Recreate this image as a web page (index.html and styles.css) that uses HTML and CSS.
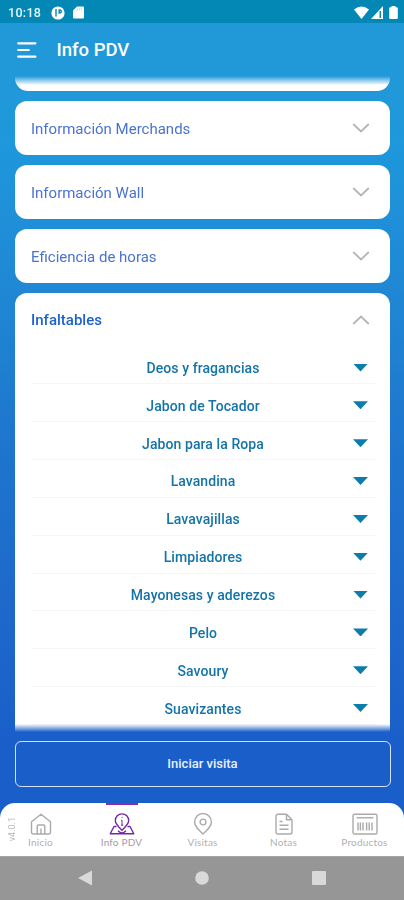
FILE: index.html
```html
<!DOCTYPE html>
<html lang="es">
<head>
<meta charset="utf-8">
<title>Info PDV</title>
<link rel="stylesheet" href="styles.css">
</head>
<body>
<div class="app">
  <div class="status">
    <span class="clock">10:18</span>
    <svg class="st-p" width="14" height="14" viewBox="0 0 14 14"><circle cx="7" cy="7" r="6.600" fill="#fff"/><path d="M5 3v7.500M8.200 4h.6a1.500 1.500 0 0 1 0 3H8.200z" fill="none" stroke="#0387b4" stroke-width="1.400"/></svg>
    <svg class="st-sd" width="11" height="13" viewBox="0 0 11 13"><path d="M4 .5h6a1 1 0 0 1 1 1v10a1 1 0 0 1-1 1H1a1 1 0 0 1-1-1v-7z" fill="#fff"/><path d="M4.500 2.200v2M6.500 2.200v2M8.500 2.200v2" stroke="#9fd0e2" stroke-width=".7"/></svg>
    <div class="st-right">
      <svg width="15" height="13" viewBox="0 0 15 13"><path d="M0 3.600Q7.500-2.600 15 3.600L7.500 13z" fill="#fff"/></svg>
      <svg width="12" height="13" viewBox="0 0 12 13"><path d="M0 13L12 0V13z" fill="#fff"/><path d="M9.300 5v7" stroke="#0387b4" stroke-width="1.600"/></svg>
      <svg class="st-bat" width="9" height="13" viewBox="0 0 9 13"><path d="M2.500 1.300V0h4v1.300h1.300q1 0 1 1V12q0 1-1 1H1.200q-1 0-1-1V2.300q0-1 1-1z" fill="#fff"/></svg>
    </div>
  </div>
  <header class="header">
    <svg width="20" height="18" viewBox="0 0 20 18"><path d="M1.200 2.300h17.200M1.200 9h10.600M1.200 15.700h17.200" stroke="#fff" stroke-width="2.200" stroke-linecap="round"/></svg>
    <h1>Info PDV</h1>
  </header>
  <main class="list">
    <section class="card stub"></section>
    <section class="card"><div class="head"><span class="t1">Información Merchands</span><svg width="18" height="10" viewBox="0 0 18 10"><path d="M1.200 1L9 8.500 16.800 1"/></svg></div></section>
    <section class="card"><div class="head"><span class="t1">Información Wall</span><svg width="18" height="10" viewBox="0 0 18 10"><path d="M1.200 1L9 8.500 16.800 1"/></svg></div></section>
    <section class="card"><div class="head"><span class="t1">Eficiencia de horas</span><svg width="18" height="10" viewBox="0 0 18 10"><path d="M1.200 1L9 8.500 16.800 1"/></svg></div></section>
    <section class="card open">
      <div class="head"><span class="t2">Infaltables</span><svg width="18" height="10" viewBox="0 0 18 10"><path d="M1.200 9L9 1.500 16.800 9"/></svg></div>
      <ul class="rows">
        <li><span>Deos y fragancias</span><i></i></li>
        <li><span>Jabon de Tocador</span><i></i></li>
        <li><span>Jabon para la Ropa</span><i></i></li>
        <li><span>Lavandina</span><i></i></li>
        <li><span>Lavavajillas</span><i></i></li>
        <li><span>Limpiadores</span><i></i></li>
        <li><span>Mayonesas y aderezos</span><i></i></li>
        <li><span>Pelo</span><i></i></li>
        <li><span>Savoury</span><i></i></li>
        <li><span>Suavizantes</span><i></i></li>
      </ul>
    </section>
  </main>
  <button class="visit">Iniciar visita</button>
  <nav class="tabs">
    <span class="version">v4.0.1</span>
    <a class="tab"><svg width="22" height="22" viewBox="0 0 22 22"><path d="M1.500 8.800L11 1.200l9.500 7.600V19q0 2-2 2H3.500q-2 0-2-2zM7.200 21v-8q0-1 1-1h5.600q1 0 1 1v8M11 15.500V21"/></svg><span>Inicio</span></a>
    <a class="tab active"><svg width="26" height="22" viewBox="0 0 26 22"><path d="M13 17.300C9.500 14 6.300 11 6.300 7.600a6.700 6.700 0 0 1 13.400 0C19.700 11 16.500 14 13 17.300zM7.500 13.500H5L1.200 20.800H24.800L21 13.500H18.500"/><path d="M9 17.800q4 4.500 8 0"/><path class="thin" d="M12.200 7.200H13v5M12 12.200h2.200M12.600 4.300h1"/></svg><span>Info PDV</span></a>
    <a class="tab"><svg width="20" height="22" viewBox="0 0 20 22"><path d="M10 21C5 16.500 1.600 13.300 1.600 9a8.400 8.400 0 0 1 16.800 0c0 4.300-3.400 7.500-8.400 12z"/><circle cx="10" cy="9" r="2.900"/></svg><span>Visitas</span></a>
    <a class="tab"><svg width="18" height="22" viewBox="0 0 18 22"><path d="M3 1.200h8.500L17 6.700V19q0 2-2 2H3q-2 0-2-2V3.200q0-2 2-2zM11.500 1.200v5.500H17M4.500 8.500h3M4.500 12.200h9M4.500 16.300h9"/></svg><span>Notas</span></a>
    <a class="tab"><svg width="26" height="22" viewBox="0 0 26 22"><rect x="1" y="1.200" width="24" height="19.800" rx="1.500"/><path d="M4.500 4.800h17"/><path d="M6 9.500v8M8.400 9.500v8M11 9.500v8M14.600 9.500v8M17.200 9.500v8M20 9.500v8"/></svg><span>Productos</span></a>
  </nav>
  <div class="system">
    <svg width="14" height="16" viewBox="0 0 14 16"><path d="M0 8L14 .5v15z" fill="#d9d9d9"/></svg>
    <svg width="14" height="14" viewBox="0 0 14 14"><circle cx="7" cy="7" r="6.800" fill="#d9d9d9"/></svg>
    <svg width="14" height="14" viewBox="0 0 14 14"><rect width="14" height="14" rx="1" fill="#d9d9d9"/></svg>
  </div>
</div>
</body>
</html>
```
FILE: styles.css
```css
* { box-sizing: border-box; }
body { margin: 0; font-family: Roboto, sans-serif; }
.app {
  width: 404px; height: 900px; overflow: hidden;
  display: flex; flex-direction: column;
  background: linear-gradient(#2199d8 0, #2199d8 76px, #1e97dc 150px, #2086d4 300px, #1e75cd 450px, #1d66ca 640px, #1a5fc9 740px, #1a5fc9 100%);
}
.status {
  height: 23px; flex: none; display: flex; align-items: center;
  padding: 2px 6px 0 8px; background: #0387b4; color: #fff;
}
.clock { width: 43px; font-size: 12.5px; letter-spacing: .3px; font-weight: 500; opacity: .92; }
.st-sd { margin-left: 8px; }
.st-right { margin-left: auto; display: flex; align-items: center; }
.st-right svg + svg { margin-left: 2px; }
.st-right .st-bat { margin-left: 6px; }
.header { height: 53px; flex: none; display: flex; align-items: center; padding: 0 17px; gap: 19.500px; }
.header h1 { margin: 0; font-size: 18.500px; font-weight: 500; color: #fff; }
.list {
  height: 656px; flex: none; overflow: hidden; padding: 0 14px 0 15px;
  display: flex; flex-direction: column; gap: 10.500px;
  -webkit-mask-image: linear-gradient(transparent 0, #000 9px, #000 648px, transparent 656px);
  mask-image: linear-gradient(transparent 0, #000 9px, #000 648px, transparent 656px);
}
.card { flex: none; background: #fff; border-radius: 12px; padding: 0 20px 0 16px; }
.stub { height: 14.500px; border-radius: 0 0 13px 13px; }
.open { height: 460px; }
.head { height: 53.500px; display: flex; align-items: center; justify-content: space-between; }
.head svg { fill: none; stroke: #b5b5b5; stroke-width: 1.800; }
.t1 { font-size: 15px; color: #4a72cf; padding-top: 2px; }
.t2 { font-size: 15px; font-weight: 500; color: #1d62cc; padding-top: 1px; }
.rows { list-style: none; margin: 0 -5px 0 0; padding: 0; }
.rows li {
  height: 37.850px; display: flex; align-items: center; position: relative;
  justify-content: center; padding-top: 6px; border-bottom: 1px solid #f5f5f6;
  font-size: 14px; letter-spacing: .08px; font-weight: 500; color: #1474a8;
}
.rows i {
  position: absolute; right: 7px; top: 17px; width: 15px; height: 8px;
  background: #0c7cad; clip-path: polygon(0 0, 100% 0, 50% 100%);
}
.visit {
  height: 46px; flex: none; margin: 8.500px 13.500px 0 14.500px; padding: 0;
  border: 1.500px solid #d4e2fa; border-radius: 6px; background: none;
  color: #e8f0ff; font: 500 13px Roboto, sans-serif;
}
.tabs {
  height: 53px; flex: none; margin-top: 16px; background: #fff;
  border-radius: 15px 15px 0 0; display: flex; position: relative;
}
.version {
  position: absolute; left: 6px; top: 14px; writing-mode: vertical-rl; transform: rotate(180deg);
  font-size: 9px; line-height: 12px; color: #b9b9b9;
}
.tab {
  flex: none; width: 81px; display: flex; flex-direction: column; align-items: center;
  padding-top: 10px; font-family: Lato, sans-serif; font-size: 10px; letter-spacing: .2px; line-height: 14px; color: #b0b0b0;
}
.tab svg { fill: none; stroke: #aaa; stroke-width: 1.400; stroke-linejoin: round; }
.tab .thin { stroke-width: 1; }
.tab.active { color: #a69bab; }
.active svg { stroke: #7527a8; }
.active::before { content: ""; width: 32px; height: 2.500px; margin: -10px 0 7.500px; background: #8a2ba8; }
.system {
  flex: 1; background: #969696; display: flex; align-items: center;
  justify-content: space-between; padding: 0 78px 0 78px; border-top: 1px solid #a5a5a5;
}
```
